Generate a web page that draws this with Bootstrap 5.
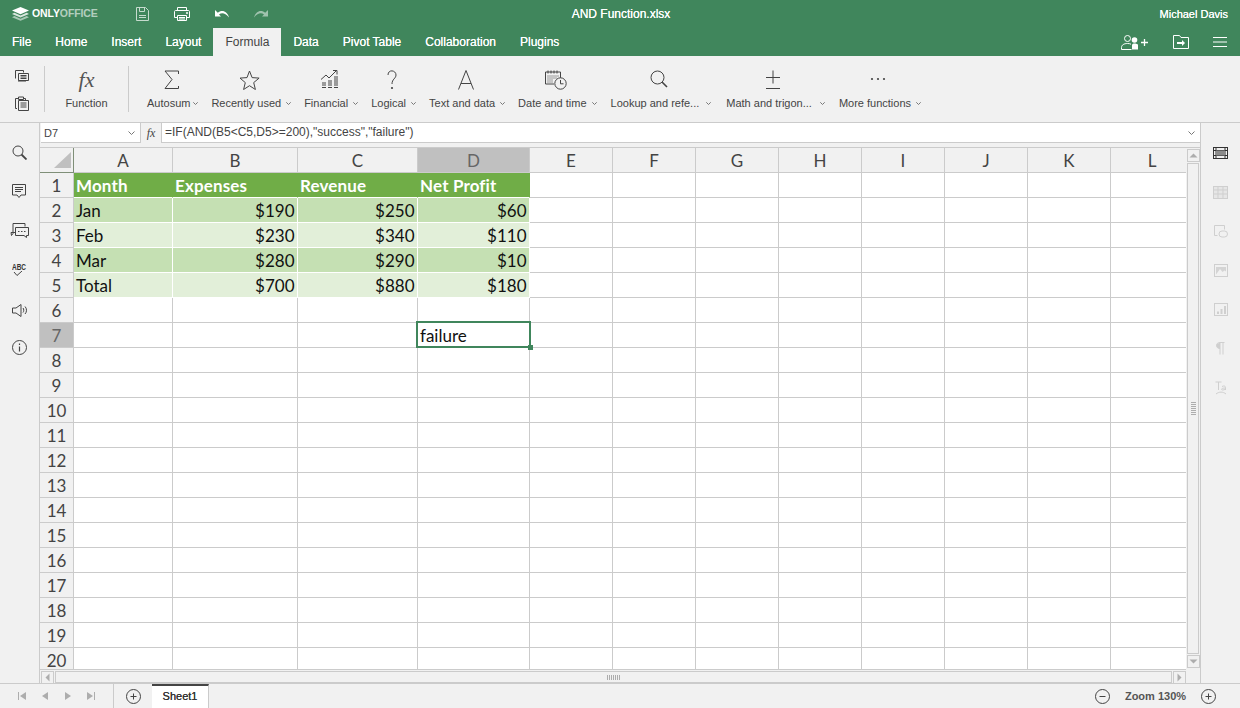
<!DOCTYPE html>
<html lang="en"><head><meta charset="utf-8"><title>AND Function.xlsx</title>
<link href="https://cdn.jsdelivr.net/npm/bootstrap@5.3.0/dist/css/bootstrap.min.css" rel="stylesheet">
<style>
html,body{height:708px;overflow:hidden}
body{font-family:"Liberation Sans",Arial,sans-serif;font-size:11px;color:#444;background:#f1f1f1;width:1240px}
svg{display:block;fill:none;stroke:#444;stroke-width:1}
svg.ico-white{stroke:#fff}
svg.ico-save{stroke:#fff;opacity:.7}
svg.ico-faded{opacity:.5}
svg.ico-dark{stroke:#333}
svg.ico-off{stroke:#cfcfcf}
.app-shell{height:708px}
.title-bar{height:28px;background:#40865c;color:#fff;font-size:12px;text-shadow:0 0 .6px #fff}
.logo-box{width:136px;padding-left:12px;gap:3px}
.logo-word{font-size:10.5px;font-weight:700;letter-spacing:-.1px;text-shadow:none}
.logo-word span{opacity:.6}
.quick-tools{gap:25px;width:147px}
.doc-name{text-align:center;padding-left:228px;white-space:nowrap;box-sizing:content-box;width:220px}
.user-name{font-size:11px;padding-right:12px;margin-left:auto}
.tab-bar{height:28px;background:#40865c}
.tab-bar .nav-link{height:28px;padding:7px 12px 0;font-size:12px;line-height:14px;color:#fff;text-shadow:0 0 .6px #fff}
.tab-bar .nav-link.active{background:#f1f1f1;color:#444;text-shadow:none;border-radius:0}
.tab-tools{margin-left:auto;padding-right:13px;gap:24.5px}
.tool-bar{height:67px;border-bottom:1px solid #cbcbcb;background:#f1f1f1}
.clip-col{width:44px;padding:14px 0 0 15px;gap:12px;height:66px}
.tool-sep{width:1px;height:46px;background:#cbcbcb;margin-top:10px}
.fn-item{width:83px;text-align:center}
.tool-group{margin-left:18px;gap:13px}
.tool-item{white-space:nowrap}
.fn-icon{height:37px;padding-top:14px}
.fx-glyph{font:italic 22px/20px "Liberation Serif",serif;color:#555}
.tool-item .fn-icon{justify-content:center;padding-right:3px}
.tool-item.shift-math .fn-icon{padding-right:6px}
.tool-item.shift-look{margin-left:1px}
.tool-item.shift-math{margin-left:2.5px}
.tool-item.shift-more{margin-left:1px}
.caret-mark{display:inline-block;width:5px;height:5px;margin-left:5px}
.caret-mark.caret-tight{margin-left:3px}
.caret-mark.caret-mid{margin-left:6.5px}
.caret-mark.caret-wide{margin-left:8px}
.lbl-text{line-height:12px;display:flex;align-items:center;justify-content:center;padding-top:4px}
.work-area{height:560px}
.left-rail{width:40px;border-right:1px solid #cbcbcb;padding-top:22px;padding-left:12px;flex:none}
.rail-btn{height:38.8px}
.rail-btn.rail-chat{margin-left:-2px}
.rail-btn.rail-abc{font:400 9px/8px "Liberation Sans",sans-serif;width:15px;height:41px;color:#333;padding-top:2px;font-weight:700}
.abc-word{display:block;transform:scaleX(.72);transform-origin:left center;white-space:nowrap}
.rail-btn.rail-spk{height:38px;padding-top:2px}
.right-rail{width:40px;border-left:1px solid #cbcbcb;padding-top:24px;flex:none;align-items:center}
.rail-r{height:39px}
.center-col{width:1160px}
.formula-bar{height:25px;background:#f1f1f1;border-bottom:1px solid #cbcbcb;flex:none}
.name-box{width:99px;height:20px;margin-left:1px;background:#fff;border-bottom:1px solid #cbcbcb;padding:0 5px 0 3px;line-height:20px;color:#444;font-size:11px;flex:none;justify-content:space-between}
.fx-box{width:22px;height:20px;border-left:1px solid #cbcbcb;border-right:1px solid #cbcbcb;flex:none;font-family:"Liberation Serif",serif;font-style:italic;font-size:12px;line-height:20px;text-align:center}
.formula-input{height:20px;background:#fff;border-bottom:1px solid #cbcbcb;padding-left:3px;line-height:19px;color:#444;font-size:12px;flex:1}
.f-caret{margin-right:5px}
.sheet-row{height:521px;background:#fff}
.grid-clip{width:1146px;overflow:hidden;height:521px;flex:none}
.xl-grid{table-layout:fixed;border-collapse:separate;border-spacing:0;width:1154px;font-family:Lato,"Open Sans",sans-serif;font-size:17px;color:#111}
.xl-grid col{width:83px}
.xl-grid col:nth-child(1){width:34px}
.xl-grid col:nth-child(2){width:99px}
.xl-grid col:nth-child(3){width:125px}
.xl-grid col:nth-child(4){width:120px}
.xl-grid col:nth-child(5){width:112px}
.xl-grid th,.xl-grid td{height:25px;padding:2px 2.5px 0 2px;border-right:1px solid #cbcbcb;border-bottom:1px solid #cbcbcb;line-height:22px;white-space:nowrap;overflow:visible}
.xl-grid thead th,.xl-grid tbody th{background:#f1f1f1;font-weight:400;text-align:center;color:#444;font-size:17px;padding:2px 2px 0}
.xl-grid th.sel-head{background:#c0c0c0;color:#666}
.xl-grid th.corner-cell{position:relative;border-right-color:#7f8f78;border-bottom-color:#7f8f78}
.corner-tri{position:absolute;right:2px;bottom:4px;width:0;height:0;border-left:17px solid transparent;border-bottom:16px solid #c0c0c0}
.xl-grid td.hd-fill{background:#70ad47;color:#fff;font-weight:700;border-color:#70ad47;border-bottom-color:#fff;letter-spacing:.15px}
.xl-grid td.band-a{background:#c5e0b3;border-color:#fff}
.xl-grid td.band-b{background:#e2efd9;border-color:#fff}
.xl-grid td.num-cell{text-align:right}
.xl-grid td.active-wrap{position:relative}
.active-frame{position:absolute;left:-2px;top:-2px;width:115px;height:27px;border:2px solid #40865c;pointer-events:none}
.active-handle{position:absolute;right:-4px;bottom:-4px;box-sizing:content-box;width:5px;height:5px;background:#40865c}
.v-scroll{width:14px;background:#f1f1f1;padding:1px;flex:none;gap:1px}
.sb-btn{width:13px;height:13px;border:1px solid #cbcbcb;background:#f1f1f1;flex:none}
.sb-thumb{flex:1;border:1px solid #cbcbcb;background:#f1f1f1}
.h-scroll{height:14px;background:#f1f1f1;flex:none;padding:1px 0 0 1px;gap:1px;width:1146px;border-top:1px solid #cbcbcb}
.status-bar{height:25px;border-top:1px solid #cbcbcb;background:#f1f1f1;flex:none;font-size:11px}
.nav-arrows{width:114px;border-right:1px solid #cbcbcb;height:24px;padding-left:18px;gap:15px}
.add-sheet{width:38px;justify-content:center}
.sheet-tab{width:57px;height:24px;background:#fff;border-top:2px solid #444;border-right:1px solid #cbcbcb;font-weight:400;text-align:center;line-height:21px;color:#333;text-shadow:0 0 .5px #333}
.zoom-zone{margin-left:auto;padding-right:24px;color:#555;font-weight:700;font-size:11px}
.zoom-label{width:91px;text-align:center}
</style></head><body>
<div class="app-shell d-flex flex-column">
  <div class="title-bar d-flex align-items-center">
    <div class="logo-box d-flex align-items-center">
      <svg width="17" height="14" viewBox="0 0 17 14"><path d="M8.500 0 17 3.600 8.500 7.200 0 3.600Z" fill="#fff" stroke="none"/><path d="M2.400 5.800 8.500 8.400 14.600 5.800 17 6.900 8.500 10.500 0 6.900Z" fill="#fff" opacity=".8" stroke="none"/><path d="M2.400 9.100 8.500 11.700 14.600 9.100 17 10.200 8.500 13.800 0 10.200Z" fill="#fff" opacity=".55" stroke="none"/></svg>
      <span class="logo-word">ONLY<span>OFFICE</span></span>
    </div>
    <div class="quick-tools d-flex align-items-center">
      <svg class="ico-save" width="13" height="14" viewBox="0 0 13 14"><path d="M.5.500h9l3 3v10H.5Z"/><path d="M3.500.5v4h5v-4M3 10.500h7M3 8.500h7"/></svg>
      <svg class="ico-white" width="16" height="14" viewBox="0 0 16 14"><path d="M3.500 4V.5h9V4M3.500 10.500H.5V4.500c0-.5.4-1 1-1h13c.6 0 1 .5 1 1v6h-3"/><path d="M3.500 8.500h9v5h-9ZM5 10.500h6M5 12h6"/><path d="M12 6h2" stroke-width="1.500"/></svg>
      <svg width="14" height="8" viewBox="0 0 14 8"><path d="M0 0v6.500h6L4 4.600C6.500 2.600 10 2.600 14 7.500 12.500 1.500 7-1 2.800 2.800Z" fill="#fff" stroke="none"/></svg>
      <svg class="ico-faded" width="14" height="8" viewBox="0 0 14 8"><path d="M14 0v6.500H8L10 4.600C7.500 2.600 4 2.600 0 7.500 1.500 1.500 7-1 11.200 2.800Z" fill="#fff" stroke="none"/></svg>
    </div>
    <div class="doc-name">AND Function.xlsx</div>
    <div class="user-name">Michael Davis</div>
  </div>
  <div class="tab-bar d-flex">
    <nav class="nav flex-nowrap">
      <a class="nav-link" href="#">File</a><a class="nav-link" href="#">Home</a><a class="nav-link" href="#">Insert</a><a class="nav-link" href="#">Layout</a><a class="nav-link active" href="#">Formula</a><a class="nav-link" href="#">Data</a><a class="nav-link" href="#">Pivot Table</a><a class="nav-link" href="#">Collaboration</a><a class="nav-link" href="#">Plugins</a>
    </nav>
    <div class="tab-tools d-flex align-items-center">
      <svg class="ico-white" width="27" height="15" viewBox="0 0 27 15"><circle cx="6.500" cy="3.500" r="3"/><path d="M.5 14.500v-2c0-2.500 2.500-4 6-4 1.500 0 2.500.2 3.500.7M.5 14.500h10"/><circle cx="13.500" cy="5" r="2.800" fill="#fff" stroke="none"/><path d="M11 14.500V10c0-.8 1-1.500 2.500-1.500S17 9 17 10v4.500Z" fill="#fff" stroke="none"/><path d="M20 7.500h7M23.500 4v7" stroke-width="1.300"/></svg>
      <svg class="ico-white" width="16" height="14" viewBox="0 0 16 14"><path d="M.5 13.500V.5h6l1.500 2h7.500v11Z"/><path d="M4 8h6" stroke-width="2"/><path d="M9 5l3 3-3 3Z" fill="#fff" stroke="none"/></svg>
      <svg class="ico-white" width="14" height="10" viewBox="0 0 14 10"><path d="M0 .5h14M0 5h14M0 9.500h14"/></svg>
    </div>
  </div>
  <div class="tool-bar d-flex">
    <div class="clip-col d-flex flex-column">
      <svg width="14" height="14" viewBox="0 0 14 14"><path d="M.5 8.500v-8h8v2"/><path d="M3.500 3.500h10v7h-10Z" fill="#f1f1f1"/><path d="M5.500 5.500h6M5.500 7h6M5.500 8.500h6"/><path d="M3 11h8"/></svg>
      <svg width="14" height="15" viewBox="0 0 14 15"><path d="M2 12.500H.5V2.500h3M8.500 2.500h2V4"/><path d="M3.500 1h5v2.500h-5Z"/><path d="M3.500 4.500h10v10h-10Z" fill="#f1f1f1"/><path d="M5.500 7h6M5.500 9h6M5.500 11h6"/></svg>
    </div>
    <div class="tool-sep"></div>
    <div class="fn-item">
      <div class="fn-icon d-flex justify-content-center"><span class="fx-glyph">fx</span></div>
      <div class="lbl-text">Function</div>
    </div>
    <div class="tool-sep"></div>
    <div class="tool-group d-flex">
      <div class="tool-item"><div class="fn-icon d-flex"><svg width="15" height="20" viewBox="0 0 15 20"><path d="M14.500 4V1H1l7 8.500L1 18.500h13.500v-2.500"/></svg></div><div class="lbl-text">Autosum<svg class="caret-mark caret-tight" viewBox="0 0 5 5"><path d="M.3 1.300 2.500 3.500 4.700 1.300" stroke="#777"/></svg></div></div>
      <div class="tool-item"><div class="fn-icon d-flex"><svg width="21" height="20" viewBox="0 0 21 20"><path d="M10.500 1l2.600 6.600 7 .5-5.400 4.500 1.700 6.900-5.900-3.800-5.900 3.800 1.700-6.900L1 8.100l7-.5Z"/></svg></div><div class="lbl-text">Recently used<svg class="caret-mark" viewBox="0 0 5 5"><path d="M.3 1.300 2.500 3.500 4.700 1.300" stroke="#777"/></svg></div></div>
      <div class="tool-item"><div class="fn-icon d-flex"><svg width="18" height="19" viewBox="0 0 18 19"><path d="M0 9.500 5 5l3 3 7-7M12 .5h4v4"/><path d="M1 17.500h4M1 15h4M1 13h4M7 17.500h4M7 15h4M7 13h4M7 11h4M13 17.500h4M13 15h4M13 13h4M13 11h4M13 9h4M13 7h4"/></svg></div><div class="lbl-text">Financial<svg class="caret-mark" viewBox="0 0 5 5"><path d="M.3 1.300 2.500 3.500 4.700 1.300" stroke="#777"/></svg></div></div>
      <div class="tool-item"><div class="fn-icon d-flex"><svg width="10" height="20" viewBox="0 0 10 20"><path d="M1 5c0-6 8-5 8 0 0 3.500-4 4-4 9"/><circle cx="5" cy="18" r="1.100" fill="#444" stroke="none"/></svg></div><div class="lbl-text">Logical<svg class="caret-mark" viewBox="0 0 5 5"><path d="M.3 1.300 2.500 3.500 4.700 1.300" stroke="#777"/></svg></div></div>
      <div class="tool-item"><div class="fn-icon d-flex"><svg width="16" height="20" viewBox="0 0 16 20"><path d="M.5 19.500 8 .5l7.500 19M3 13.500h10"/></svg></div><div class="lbl-text">Text and data<svg class="caret-mark" viewBox="0 0 5 5"><path d="M.3 1.300 2.500 3.500 4.700 1.300" stroke="#777"/></svg></div></div>
      <div class="tool-item"><div class="fn-icon d-flex"><svg width="22" height="20" viewBox="0 0 22 20"><path d="M.5 2h15v7M9 14H.5V2"/><path d="M3 .5v3M6 .5v3M9 .5v3M12 .5v3"/><path d="M2.500 6h11M2.500 8h9M2.500 10h6M2.500 12h5" stroke-dasharray="1 1"/><circle cx="15.500" cy="13.500" r="5.700" fill="#f1f1f1"/><path d="M15.500 10v3.800h3"/></svg></div><div class="lbl-text">Date and time<svg class="caret-mark" viewBox="0 0 5 5"><path d="M.3 1.300 2.500 3.500 4.700 1.300" stroke="#777"/></svg></div></div>
      <div class="tool-item shift-look"><div class="fn-icon d-flex"><svg width="18" height="18" viewBox="0 0 18 18"><circle cx="7.500" cy="7.500" r="6.500"/><path d="m12 12 5 5" stroke-width="1.600"/></svg></div><div class="lbl-text">Lookup and refe...<svg class="caret-mark caret-mid" viewBox="0 0 5 5"><path d="M.3 1.300 2.500 3.500 4.700 1.300" stroke="#777"/></svg></div></div>
      <div class="tool-item shift-math"><div class="fn-icon d-flex"><svg width="14" height="20" viewBox="0 0 14 20"><path d="M0 7.500h14M7 .5v13M0 18.500h14"/></svg></div><div class="lbl-text">Math and trigon...<svg class="caret-mark caret-wide" viewBox="0 0 5 5"><path d="M.3 1.300 2.500 3.500 4.700 1.300" stroke="#777"/></svg></div></div>
      <div class="tool-item shift-more"><div class="fn-icon d-flex"><svg width="16" height="12" viewBox="0 0 16 12"><circle cx="2" cy="9" r="1.100" fill="#444" stroke="none"/><circle cx="8" cy="9" r="1.100" fill="#444" stroke="none"/><circle cx="14" cy="9" r="1.100" fill="#444" stroke="none"/></svg></div><div class="lbl-text">More functions<svg class="caret-mark" viewBox="0 0 5 5"><path d="M.3 1.300 2.500 3.500 4.700 1.300" stroke="#777"/></svg></div></div>
    </div>
  </div>
  <div class="work-area d-flex">
    <div class="left-rail d-flex flex-column">
      <div class="rail-btn"><svg width="15" height="15" viewBox="0 0 15 15"><circle cx="6" cy="6" r="5"/><path d="m9.500 9.500 5 5" stroke-width="1.800"/></svg></div>
      <div class="rail-btn"><svg width="15" height="15" viewBox="0 0 15 15"><path d="M.5.500h13v10.500H9l-2 2.500-2-2.500H.5Z"/><path d="M3 3.500h8M3 5.500h8M3 7.500h6"/></svg></div>
      <div class="rail-btn rail-chat"><svg width="19" height="15" viewBox="0 0 19 15"><path d="M5 9.500H1l.5 3 1.500-2V.5h12v3"/><path d="M5.500 4.500h13v8h-2v2l-2.500-2H5.500Z" fill="#f1f1f1"/><path d="M8 8.500h1.500M11 8.500h1.500M14 8.500h1.500"/></svg></div>
      <div class="rail-btn rail-abc"><span class="abc-word">ABC</span><svg width="12" height="6" viewBox="0 0 12 6"><path d="m2 1 3 3.500L10 0"/></svg></div>
      <div class="rail-btn rail-spk"><svg width="16" height="13" viewBox="0 0 16 13"><path d="M.5 4h3.500l5-3.500v12L4 9H.5Z"/><path d="M11 4c1 1 1 3.500 0 4.500M13 2.500c2 2 2 5.500 0 7.500"/></svg></div>
      <div class="rail-btn"><svg width="15" height="15" viewBox="0 0 15 15"><circle cx="7.500" cy="7.500" r="7"/><path d="M7.500 6.500v5M7.500 3.500v1.500" stroke-width="1.200"/></svg></div>
    </div>
    <div class="center-col d-flex flex-column">
      <div class="formula-bar d-flex">
        <div class="name-box d-flex">D7<svg width="7" height="20" viewBox="0 0 7 20"><path d="M.5 8.500 3.500 11.500 6.500 8.500" stroke="#777"/></svg></div>
        <div class="fx-box">fx</div>
        <div class="formula-input d-flex justify-content-between"><span>=IF(AND(B5&lt;C5,D5&gt;=200),"success","failure")</span><svg class="f-caret" width="7" height="20" viewBox="0 0 7 20"><path d="M.5 8.500 3.500 11.500 6.500 8.500" stroke="#777"/></svg></div>
      </div>
      <div class="sheet-row d-flex">
        <div class="grid-clip">
          <table class="xl-grid">
            <colgroup><col><col><col><col><col><col><col><col><col><col><col><col><col></colgroup>
            <thead><tr><th class="corner-cell"><span class="corner-tri"></span></th><th>A</th><th>B</th><th>C</th><th class="sel-head">D</th><th>E</th><th>F</th><th>G</th><th>H</th><th>I</th><th>J</th><th>K</th><th>L</th></tr></thead>
            <tbody>
              <tr><th>1</th><td class="hd-fill">Month</td><td class="hd-fill">Expenses</td><td class="hd-fill">Revenue</td><td class="hd-fill">Net Profit</td><td></td><td></td><td></td><td></td><td></td><td></td><td></td><td></td></tr>
              <tr><th>2</th><td class="band-a">Jan</td><td class="band-a num-cell">$190</td><td class="band-a num-cell">$250</td><td class="band-a num-cell">$60</td><td></td><td></td><td></td><td></td><td></td><td></td><td></td><td></td></tr>
              <tr><th>3</th><td class="band-b">Feb</td><td class="band-b num-cell">$230</td><td class="band-b num-cell">$340</td><td class="band-b num-cell">$110</td><td></td><td></td><td></td><td></td><td></td><td></td><td></td><td></td></tr>
              <tr><th>4</th><td class="band-a">Mar</td><td class="band-a num-cell">$280</td><td class="band-a num-cell">$290</td><td class="band-a num-cell">$10</td><td></td><td></td><td></td><td></td><td></td><td></td><td></td><td></td></tr>
              <tr><th>5</th><td class="band-b">Total</td><td class="band-b num-cell">$700</td><td class="band-b num-cell">$880</td><td class="band-b num-cell">$180</td><td></td><td></td><td></td><td></td><td></td><td></td><td></td><td></td></tr>
              <tr><th>6</th><td></td><td></td><td></td><td></td><td></td><td></td><td></td><td></td><td></td><td></td><td></td><td></td></tr>
              <tr><th class="sel-head">7</th><td></td><td></td><td></td><td class="active-wrap">failure<span class="active-frame"><span class="active-handle"></span></span></td><td></td><td></td><td></td><td></td><td></td><td></td><td></td><td></td></tr>
              <tr><th>8</th><td></td><td></td><td></td><td></td><td></td><td></td><td></td><td></td><td></td><td></td><td></td><td></td></tr>
              <tr><th>9</th><td></td><td></td><td></td><td></td><td></td><td></td><td></td><td></td><td></td><td></td><td></td><td></td></tr>
              <tr><th>10</th><td></td><td></td><td></td><td></td><td></td><td></td><td></td><td></td><td></td><td></td><td></td><td></td></tr>
              <tr><th>11</th><td></td><td></td><td></td><td></td><td></td><td></td><td></td><td></td><td></td><td></td><td></td><td></td></tr>
              <tr><th>12</th><td></td><td></td><td></td><td></td><td></td><td></td><td></td><td></td><td></td><td></td><td></td><td></td></tr>
              <tr><th>13</th><td></td><td></td><td></td><td></td><td></td><td></td><td></td><td></td><td></td><td></td><td></td><td></td></tr>
              <tr><th>14</th><td></td><td></td><td></td><td></td><td></td><td></td><td></td><td></td><td></td><td></td><td></td><td></td></tr>
              <tr><th>15</th><td></td><td></td><td></td><td></td><td></td><td></td><td></td><td></td><td></td><td></td><td></td><td></td></tr>
              <tr><th>16</th><td></td><td></td><td></td><td></td><td></td><td></td><td></td><td></td><td></td><td></td><td></td><td></td></tr>
              <tr><th>17</th><td></td><td></td><td></td><td></td><td></td><td></td><td></td><td></td><td></td><td></td><td></td><td></td></tr>
              <tr><th>18</th><td></td><td></td><td></td><td></td><td></td><td></td><td></td><td></td><td></td><td></td><td></td><td></td></tr>
              <tr><th>19</th><td></td><td></td><td></td><td></td><td></td><td></td><td></td><td></td><td></td><td></td><td></td><td></td></tr>
              <tr><th>20</th><td></td><td></td><td></td><td></td><td></td><td></td><td></td><td></td><td></td><td></td><td></td><td></td></tr>
            </tbody>
          </table>
        </div>
        <div class="v-scroll d-flex flex-column">
          <div class="sb-btn"><svg width="11" height="11" viewBox="0 0 11 11"><path d="M1.500 7.500 5.500 3.500 9.500 7.500Z" fill="#adadad" stroke="none"/></svg></div>
          <div class="sb-thumb d-flex align-items-center justify-content-center"><svg width="7" height="13" viewBox="0 0 7 13"><path d="M1 .5h5M1 2.500h5M1 4.500h5M1 6.500h5M1 8.500h5M1 10.500h5M1 12.500h5" stroke="#adadad"/></svg></div>
          <div class="sb-btn"><svg width="11" height="11" viewBox="0 0 11 11"><path d="M1.500 3.500 5.500 7.500 9.500 3.500Z" fill="#adadad" stroke="none"/></svg></div>
        </div>
      </div>
      <div class="d-flex flex-grow-1">
        <div class="h-scroll d-flex">
          <div class="sb-btn"><svg width="11" height="11" viewBox="0 0 11 11"><path d="M7.500 1.500 3.500 5.500 7.500 9.500Z" fill="#adadad" stroke="none"/></svg></div>
          <div class="sb-thumb d-flex align-items-center justify-content-center"><svg width="13" height="7" viewBox="0 0 13 7"><path d="M.5 1v5M2.500 1v5M4.500 1v5M6.500 1v5M8.500 1v5M10.500 1v5M12.500 1v5" stroke="#adadad"/></svg></div>
          <div class="sb-btn"><svg width="11" height="11" viewBox="0 0 11 11"><path d="M3.500 1.500 7.500 5.500 3.500 9.500Z" fill="#adadad" stroke="none"/></svg></div>
        </div>
      </div>
    </div>
    <div class="right-rail d-flex flex-column">
      <div class="rail-r"><svg class="ico-dark" width="15" height="12" viewBox="0 0 15 12"><rect x=".5" y=".5" width="14" height="11"/><path d="M.5 3.500h14M.5 8.500h14M3 .5v11M12 .5v11"/><rect x="3" y="3.500" width="9" height="5" fill="#8c8c8c" stroke="none"/></svg></div>
      <div class="rail-r"><svg class="ico-off" width="15" height="13" viewBox="0 0 15 13"><rect x=".5" y=".5" width="14" height="12" fill="#e6e6e6"/><path d="M.5 4h14M.5 8h14M5 .5v12M10 .5v12"/></svg></div>
      <div class="rail-r"><svg class="ico-off" width="14" height="13" viewBox="0 0 14 13"><path d="M3.500 10.500H.5V.5h10v4"/><rect x="5" y="6" width="8.500" height="6" rx="3" fill="#f1f1f1"/></svg></div>
      <div class="rail-r"><svg class="ico-off" width="14" height="13" viewBox="0 0 14 13"><rect x=".5" y=".5" width="13" height="12"/><path d="M2 10.500 6 5l2.500 3 2-1.500 1.500 1V3H2Z" fill="#d4d4d4" stroke="none"/></svg></div>
      <div class="rail-r"><svg class="ico-off" width="14" height="13" viewBox="0 0 14 13"><rect x=".5" y=".5" width="13" height="12"/><path d="M3 8.500h2v2.500H3ZM6.500 6h2v5h-2ZM10 3h2v8h-2Z" fill="#cfcfcf" stroke="none"/></svg></div>
      <div class="rail-r"><svg class="ico-off" width="9" height="13" viewBox="0 0 9 13"><path d="M4 .5v12M7 .5v12M8.500.5H4C1.500.5.500 2 .500 3.500S1.500 6.500 4 6.500"/><path d="M4 1v5.500C1.500 6.500.5 5 .5 3.500S1.500 1 4 1Z" fill="#cfcfcf" stroke="none"/></svg></div>
      <div class="rail-r"><svg class="ico-off" width="12" height="14" viewBox="0 0 12 14"><path d="M.5 1h6M3.500 1v8M7 5.500c2-1 3.500-.5 3.500 1v2.500M10.500 7C8 7 6.500 7.500 6.500 8.300S8.500 9.500 10.500 8M1 13c3-2.500 7-2.500 10 0"/></svg></div>
    </div>
  </div>
  <div class="status-bar d-flex align-items-center">
    <div class="nav-arrows d-flex align-items-center">
      <svg width="8" height="8" viewBox="0 0 8 8"><path d="M.5 0v8" stroke="#adadad"/><path d="M8 0v8L2 4Z" fill="#adadad" stroke="none"/></svg>
      <svg width="8" height="8" viewBox="0 0 8 8"><path d="M7 0v8L1 4Z" fill="#adadad" stroke="none"/></svg>
      <svg width="8" height="8" viewBox="0 0 8 8"><path d="M1 0v8l6-4Z" fill="#adadad" stroke="none"/></svg>
      <svg width="8" height="8" viewBox="0 0 8 8"><path d="M7.500 0v8" stroke="#adadad"/><path d="M0 0v8l6-4Z" fill="#adadad" stroke="none"/></svg>
    </div>
    <div class="add-sheet d-flex"><svg width="15" height="15" viewBox="0 0 15 15"><circle cx="7.500" cy="7.500" r="7"/><path d="M4.500 7.500h6M7.500 4.500v6"/></svg></div>
    <div class="sheet-tab">Sheet1</div>
    <div class="zoom-zone d-flex align-items-center">
      <svg width="15" height="15" viewBox="0 0 15 15"><circle cx="7.500" cy="7.500" r="7"/><path d="M4.500 7.500h6"/></svg>
      <div class="zoom-label">Zoom 130%</div>
      <svg width="15" height="15" viewBox="0 0 15 15"><circle cx="7.500" cy="7.500" r="7"/><path d="M4.500 7.500h6M7.500 4.500v6"/></svg>
    </div>
  </div>
</div>
<script src="https://cdn.jsdelivr.net/npm/bootstrap@5.3.0/dist/js/bootstrap.bundle.min.js"></script>
</body></html>
